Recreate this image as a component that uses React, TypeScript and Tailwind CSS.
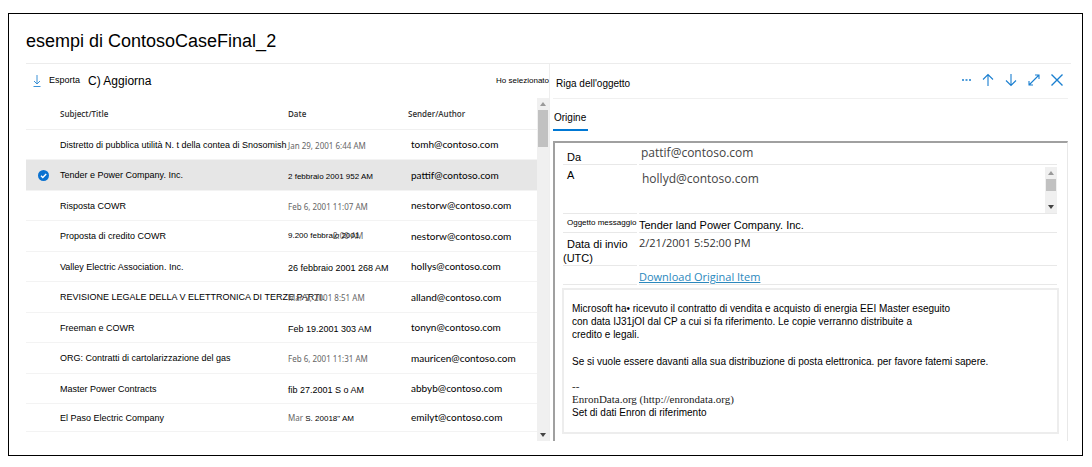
import { useState, type ReactNode } from "react";

type Item = {
  title: string;
  date: ReactNode;
  sender: string;
};

const muted = "font-['Noto_Sans',sans-serif] text-[8px] text-[#666]";
const small = "text-[8px]";
const regular = "text-[9px]";

const items: Item[] = [
  {
    title: "Distretto di pubblica utilità N. t della contea di Snosomish",
    date: <span className={muted}>Jan 29, 2001 6:44 AM</span>,
    sender: "tomh@contoso.com",
  },
  {
    title: "Tender e Power Company. Inc.",
    date: <span className={small}>2 febbraio 2001 952 AM</span>,
    sender: "pattif@contoso.com",
  },
  {
    title: "Risposta COWR",
    date: <span className={muted}>Feb 6, 2001 11:07 AM</span>,
    sender: "nestorw@contoso.com",
  },
  {
    title: "Proposta di credito COWR",
    date: (
      <span className="grid justify-start">
        <span className={`${muted} col-start-1 row-start-1 pl-[45px]`}>2:00 AM</span>
        <span className={`${small} col-start-1 row-start-1`}>9.200 febbraio 2001</span>
      </span>
    ),
    sender: "nestorw@contoso.com",
  },
  {
    title: "Valley Electric Association. Inc.",
    date: <span className={regular}>26 febbraio 2001 268 AM</span>,
    sender: "hollys@contoso.com",
  },
  {
    title: "REVISIONE LEGALE DELLA V ELETTRONICA DI TERZE PARTI.",
    date: <span className={muted}>Mar 2, 2001 8:51 AM</span>,
    sender: "alland@contoso.com",
  },
  {
    title: "Freeman e COWR",
    date: <span className={regular}>Feb 19.2001 303 AM</span>,
    sender: "tonyn@contoso.com",
  },
  {
    title: "ORG: Contratti di cartolarizzazione del gas",
    date: <span className={muted}>Feb 6, 2001 11:31 AM</span>,
    sender: "mauricen@contoso.com",
  },
  {
    title: "Master Power Contracts",
    date: <span className={regular}>fib 27.2001 S o AM</span>,
    sender: "abbyb@contoso.com",
  },
  {
    title: "El Paso Electric Company",
    date: (
      <span className={small}>
        <span className={muted}>Mar</span> S. 20018" AM
      </span>
    ),
    sender: "emilyt@contoso.com",
  },
];

function Triangle({ down = false, className }: { down?: boolean; className: string }) {
  return (
    <svg viewBox="0 0 6 4" className={`h-1 w-1.5 ${className}`} fill="currentColor" aria-hidden="true">
      <path d={down ? "M0 0h6L3 4z" : "M0 4h6L3 0z"} />
    </svg>
  );
}

function ScrollBar({ thumb }: { thumb: string }) {
  return (
    <div className="flex w-3 shrink-0 flex-col items-center bg-[#f0f0f0]" aria-hidden="true">
      <div className="grid h-3 place-items-center">
        <Triangle className="text-[#9a9a9a]" />
      </div>
      <div className={`w-[10px] bg-[#c1c1c1] ${thumb}`} />
      <div className="mt-auto grid h-3 place-items-center">
        <Triangle down className="text-[#444]" />
      </div>
    </div>
  );
}

function IconButton({ label, children }: { label: string; children: ReactNode }) {
  return (
    <button type="button" aria-label={label} className="grid size-[23px] place-items-center text-[#1a7fd0]">
      <svg viewBox="0 0 14 14" className="size-3.5" fill="none" stroke="currentColor" strokeWidth="1.1">
        {children}
      </svg>
    </button>
  );
}

function ItemTable() {
  const [selected, setSelected] = useState(1);
  return (
    <table className="w-full table-fixed border-separate border-spacing-0 whitespace-nowrap text-left">
      <colgroup>
        <col className="w-[34px]" />
        <col className="w-[228px]" />
        <col className="w-[120px]" />
        <col />
      </colgroup>
      <thead>
        <tr className="h-8 font-['Open_Sans',sans-serif] text-[8px] text-[#333]">
          <th className="border-b border-[#f0f0f0]" aria-label="Selezione" />
          <th className="border-b border-[#f0f0f0] font-semibold">Subject/Title</th>
          <th className="border-b border-[#f0f0f0] font-semibold">Date</th>
          <th className="border-b border-[#f0f0f0] font-semibold">Sender/Author</th>
        </tr>
      </thead>
      <tbody>
        {items.map((item, index) => (
          <tr
            key={item.title}
            className={`h-[30px] even:h-[31px] last:h-[28px]! [&>td]:border-b [&>td]:border-[#f3f3f3] [&>td]:p-0 ${
              index === selected ? "bg-[#e6e6e6]" : ""
            }`}
          >
            <td>
              <label className="grid place-items-center">
                <input
                  type="checkbox"
                  aria-label={item.title}
                  checked={index === selected}
                  onChange={() => setSelected(index)}
                  className="col-start-1 row-start-1 size-[11px] appearance-none rounded-full checked:bg-[#0b72d0]"
                />
                {index === selected && (
                  <svg
                    viewBox="0 0 11 11"
                    className="col-start-1 row-start-1 size-[11px]"
                    fill="none"
                    stroke="white"
                    strokeWidth="1.4"
                    aria-hidden="true"
                  >
                    <path d="M3 5.7l1.8 1.8 3.4-3.6" />
                  </svg>
                )}
              </label>
            </td>
            <td className="pt-0.5! text-[9px]">{item.title}</td>
            <td className="leading-3">{item.date}</td>
            <td className="font-[Lato,sans-serif] text-[10px]">
              <span className="pl-[3px]">{item.sender}</span>
            </td>
          </tr>
        ))}
      </tbody>
    </table>
  );
}

function ItemDetails() {
  return (
    <dl className="grid grid-cols-[74px_1fr] gap-x-0.5 pr-2.5 pl-2 text-[11px] leading-[15px] [&>*]:border-b [&>*]:border-[#e8e8e8]">
      <dt className="h-[22px] pt-2 pl-1 leading-[13px]">Da</dt>
      <dd className="pt-0.5 pl-0.5 font-['Open_Sans',sans-serif] text-[12px] text-[#444]">pattif@contoso.com</dd>
      <dt className="h-[49px] pt-[3px] pl-1">A</dt>
      <dd className="flex items-stretch justify-between pt-0.5 pl-[3px]">
        <span className="pt-1 font-['Open_Sans',sans-serif] text-[12px] text-[#444]">hollyd@contoso.com</span>
        <ScrollBar thumb="h-3" />
      </dd>
      <dt className="h-[19px] pt-px pl-1 text-[8px]">Oggetto messaggio</dt>
      <dd className="pt-1 leading-[14px]">Tender land Power Company. Inc.</dd>
      <dt className="h-[33px] pt-1 leading-[14px]">
        <span className="pl-1">Data di invio</span>
        <br />
        (UTC)
      </dt>
      <dd className="pt-0.5 font-['Open_Sans',sans-serif] text-[#333]">2/21/2001 5:52:00 PM</dd>
      <dt className="h-[19px]" />
      <dd className="pt-[3px] font-['Open_Sans',sans-serif]">
        <a href="#download" className="text-[#2b88bd] underline">
          Download Original Item
        </a>
      </dd>
    </dl>
  );
}

export default function App() {
  return (
    <div className="bg-white px-2 pt-[13px] pb-[11px] pr-[9px] font-['Liberation_Sans',Arial,sans-serif] text-black">
      <main className="border border-black pt-4 pr-[11px] pb-3.5 pl-[17px]">
        <h1 className="pb-2.5 text-[18px] leading-[23px]">esempi di ContosoCaseFinal_2</h1>
        <div className="flex border-t border-[#ececec]">
          <section className="w-[524px] shrink-0 border-r border-[#eee]">
            <div className="flex h-[34px] items-center">
              <button type="button" className="flex items-center gap-[5px] pl-1 text-[9px]">
                <svg viewBox="0 0 14 14" className="size-3.5 text-[#3c92d6]" fill="none" stroke="currentColor" aria-hidden="true">
                  <path d="M7 1v8.5M4 7l3 3 3-3M3.5 12.5h7" />
                </svg>
                Esporta
              </button>
              <button type="button" className="pl-2 text-[12px]">
                C) Aggiorna
              </button>
              <span className="ml-auto text-[8px]">Ho selezionato</span>
            </div>
            <div className="flex h-[343px]">
              <div className="min-w-0 flex-1">
                <ItemTable />
              </div>
              <ScrollBar thumb="h-[37px]" />
            </div>
          </section>
          <section className="min-w-0 flex-1 pr-[3px] pl-[3px]">
            <header className="flex h-[35px] items-center justify-between border-b border-[#f0f0f0] pl-[3px]">
              <h2 className="pt-1 text-[10px]">Riga dell'oggetto</h2>
              <div className="flex pb-0.5">
                <IconButton label="Altro">
                  <path d="M4 7h2M7.500 7h2M11 7h2" strokeWidth="1.500" />
                </IconButton>
                <IconButton label="Precedente">
                  <path d="M7 13V1.500M2 6.500l5-5 5 5" />
                </IconButton>
                <IconButton label="Successivo">
                  <path d="M7 1v11.500M2 7.500l5 5 5-5" />
                </IconButton>
                <IconButton label="Espandi">
                  <path d="M2 12L12 2M8 2h4v4M2 8v4h4" />
                </IconButton>
                <IconButton label="Chiudi">
                  <path d="M1.500 1.500l11 11M12.500 1.500l-11 11" strokeWidth="1.400" />
                </IconButton>
              </div>
            </header>
            <nav className="flex h-[42px]">
              <a href="#origine" className="h-8 border-b-2 border-[#0078d4] pt-[11px] pr-0.5 pl-px text-[10px] leading-4">
                Origine
              </a>
            </nav>
            <article className="h-[300px] border-t-2 border-r border-l-2 border-t-[#a0a0a0] border-r-[#e8e8e8] border-l-[#a0a0a0]">
              <ItemDetails />
              <div className="mt-[3px] mr-2 ml-[7px] h-[146px] border-2 border-[#ededed] px-2 pt-3 text-[10px] leading-[13px]">
                <p>
                  Microsoft ha• ricevuto il contratto di vendita e acquisto di energia EEI Master eseguito
                  <br />
                  con data IJ31jOI dal CP a cui si fa riferimento. Le copie verranno distribuite a
                  <br />
                  credito e legali.
                </p>
                <p className="pt-3.5">
                  Se si vuole essere davanti alla sua distribuzione di posta elettronica. per favore fatemi sapere.
                </p>
                <p className="pt-3 font-['Liberation_Serif',serif] text-[11px] text-[#222]">
                  --
                  <br />
                  EnronData.org (http://enrondata.org)
                </p>
                <p>Set di dati Enron di riferimento</p>
              </div>
            </article>
          </section>
        </div>
      </main>
    </div>
  );
}
